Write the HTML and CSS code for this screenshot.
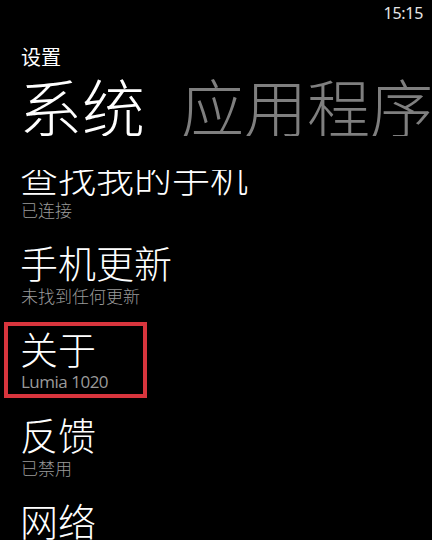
FILE: index.html
```html
<!DOCTYPE html>
<html lang="zh-CN">
<head>
<meta charset="utf-8">
<title>设置</title>
<link rel="stylesheet" href="styles.css">
</head>
<body>
<div class="screen">
  <div class="status"><span class="time">15:15</span></div>
  <div class="app-title">设置</div>
  <div class="pivot">
    <span class="pivot-item active">系统</span>
    <span class="pivot-item">应用程序</span>
  </div>
  <div class="content">
    <ul class="list">
      <li class="item first">
        <div class="item-title">查找我的手机</div>
        <div class="item-sub">已连接</div>
      </li>
      <li class="item">
        <div class="item-title">手机更新</div>
        <div class="item-sub">未找到任何更新</div>
      </li>
      <li class="item highlighted">
        <div class="item-title">关于</div>
        <div class="item-sub latin">Lumia 1020</div>
      </li>
      <li class="item">
        <div class="item-title">反馈</div>
        <div class="item-sub">已禁用</div>
      </li>
      <li class="item">
        <div class="item-title">网络</div>
        <div class="item-sub">已连接</div>
      </li>
    </ul>
  </div>
</div>
</body>
</html>
```
FILE: styles.css
```css
html, body {
  margin: 0;
  padding: 0;
  background: #000;
}

.screen {
  width: 432px;
  height: 540px;
  overflow: hidden;
  display: flex;
  flex-direction: column;
  background: #000;
  color: #fff;
  font-family: "Noto Sans CJK SC", "Noto Sans", sans-serif;
  font-weight: 300;
}

.status {
  height: 30px;
  box-sizing: border-box;
  padding: 5px 9px 0 0;
  display: flex;
  justify-content: flex-end;
  align-items: flex-start;
  flex: none;
}

.time {
  font-family: "Noto Sans", "Open Sans", sans-serif;
  font-weight: 400;
  font-size: 16px;
  line-height: 16px;
  color: #e6e6e6;
  letter-spacing: -0.3px;
}

.app-title {
  flex: none;
  margin-top: 17px;
  padding-left: 21px;
  font-size: 20px;
  line-height: 20px;
  font-weight: 400;
  color: #fff;
}

.pivot {
  flex: none;
  margin-top: 6px;
  padding-left: 19px;
  height: 63px;
  display: flex;
  gap: 36px;
  white-space: nowrap;
  overflow: hidden;
  font-size: 63px;
  line-height: 63px;
  font-weight: 300;
}

.pivot-item {
  flex: none;
  color: #7f7f7f;
}

.pivot-item.active {
  color: #fff;
}

.content {
  flex: 1;
  margin-top: 34px;
  overflow: hidden;
}

.list {
  list-style: none;
  margin: 0;
  padding: 0 0 0 20px;
}

.item {
  margin-bottom: 25px;
}

.item.first {
  margin-top: -13px;
}

.item-title {
  font-size: 38px;
  line-height: 38px;
  color: #fff;
  white-space: nowrap;
}

.item-sub {
  margin-top: 6px;
  font-size: 17px;
  line-height: 17px;
  color: #9a9a9a;
  padding-left: 1px;
}

.item-sub.latin {
  font-family: "Open Sans", "Noto Sans", sans-serif;
  font-size: 17px;
  font-weight: 400;
  letter-spacing: -0.5px;
}

.highlighted {
  position: relative;
}

.highlighted::after {
  content: "";
  position: absolute;
  left: -16px;
  top: -7px;
  width: 143px;
  height: 76px;
  box-sizing: border-box;
  border: 4px solid #d8353d;
  pointer-events: none;
}
```
